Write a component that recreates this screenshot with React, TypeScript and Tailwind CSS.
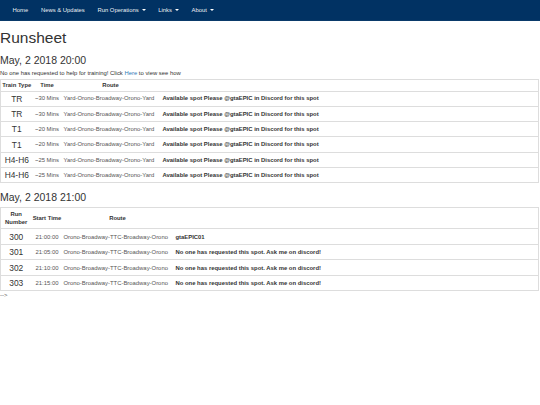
import React from "react";

const trainRows = [
  { type: "TR", time: "~30 Mins" },
  { type: "TR", time: "~30 Mins" },
  { type: "T1", time: "~20 Mins" },
  { type: "T1", time: "~20 Mins" },
  { type: "H4-H6", time: "~25 Mins" },
  { type: "H4-H6", time: "~25 Mins" },
];

const runRows = [
  { num: "300", start: "21:00:00", who: "gtaEPIC01" },
  { num: "301", start: "21:05:00", who: "No one has requested this spot. Ask me on discord!" },
  { num: "302", start: "21:10:00", who: "No one has requested this spot. Ask me on discord!" },
  { num: "303", start: "21:15:00", who: "No one has requested this spot. Ask me on discord!" },
];

const Caret = () => (
  <span className="ml-[3px] inline-block h-0 w-0 border-x-[2px] border-t-[2px] border-x-transparent border-t-white align-middle" />
);

const navItems = [
  { label: "Home" },
  { label: "News & Updates" },
  { label: "Run Operations", caret: true },
  { label: "Links", caret: true },
  { label: "About", caret: true },
];

export default function App() {
  return (
    <div className="min-h-[405px] w-[540px] bg-white font-['Liberation_Sans',Arial,sans-serif] text-[5.9px] leading-[8.4px] text-[#333]">
      <nav className="flex h-[21px] items-center border-b border-[#0a3a6a] bg-[#013263] px-[6.3px]">
        {navItems.map((item) => (
          <a key={item.label} className="flex items-center px-[6.3px] text-[5.9px] text-white/95">
            {item.label}
            {item.caret ? <Caret /> : null}
          </a>
        ))}
      </nav>

      <h1 className="mt-[8px] text-[15.5px] leading-[17px] font-normal">Runsheet</h1>
      <h3 className="mt-[7.5px] text-[10.5px] leading-[12px] font-normal">May, 2 2018 20:00</h3>
      <p className="mt-[3.5px] leading-[8px]">
        No one has requested to help for training! Click{" "}
        <a className="text-[#337ab7]">Here</a> to view see how
      </p>

      <table className="mt-[1.5px] w-[539px] table-fixed border-collapse border border-[#ddd]">
        <colgroup>
          <col className="w-[32px]" />
          <col className="w-[29px]" />
          <col className="w-[98px]" />
          <col />
        </colgroup>
        <thead>
          <tr className="h-[12px] border-b border-[#ddd]">
            <th className="text-center font-bold">Train Type</th>
            <th className="text-center font-bold">Time</th>
            <th className="text-center font-bold">Route</th>
            <th />
          </tr>
        </thead>
        <tbody>
          {trainRows.map((r, i) => (
            <tr key={i} className="h-[15.33px] border-t border-[#ddd]">
              <td className="text-center text-[8.4px] leading-[10px]">{r.type}</td>
              <td className="whitespace-nowrap text-center text-[#555]">{r.time}</td>
              <td className="whitespace-nowrap pl-[2px] text-left text-[#555]">
                Yard-Orono-Broadway-Orono-Yard
              </td>
              <td className="pl-[3px] font-bold">
                Available spot Please @gtaEPIC in Discord for this spot
              </td>
            </tr>
          ))}
        </tbody>
      </table>

      <h3 className="mt-[8px] text-[10.5px] leading-[12px] font-normal">May, 2 2018 21:00</h3>

      <table className="mt-[4px] w-[539px] table-fixed border-collapse border border-[#ddd]">
        <colgroup>
          <col className="w-[31px]" />
          <col className="w-[31px]" />
          <col className="w-[110px]" />
          <col />
        </colgroup>
        <thead>
          <tr className="h-[21px] border-b border-[#ddd]">
            <th className="text-center font-bold leading-[8px]">
              Run
              <br />
              Number
            </th>
            <th className="whitespace-nowrap text-center font-bold">Start Time</th>
            <th className="text-center font-bold">Route</th>
            <th />
          </tr>
        </thead>
        <tbody>
          {runRows.map((r) => (
            <tr key={r.num} className="h-[15.5px] border-t border-[#ddd]">
              <td className="text-center text-[8.4px] leading-[10px]">{r.num}</td>
              <td className="whitespace-nowrap text-center text-[#555]">{r.start}</td>
              <td className="whitespace-nowrap pl-[1px] text-left text-[#555]">
                Orono-Broadway-TTC-Broadway-Orono
              </td>
              <td className="pl-[3px] font-bold">{r.who}</td>
            </tr>
          ))}
        </tbody>
      </table>
      <p className="leading-[8px] text-[#555]">--&gt;</p>
    </div>
  );
}
